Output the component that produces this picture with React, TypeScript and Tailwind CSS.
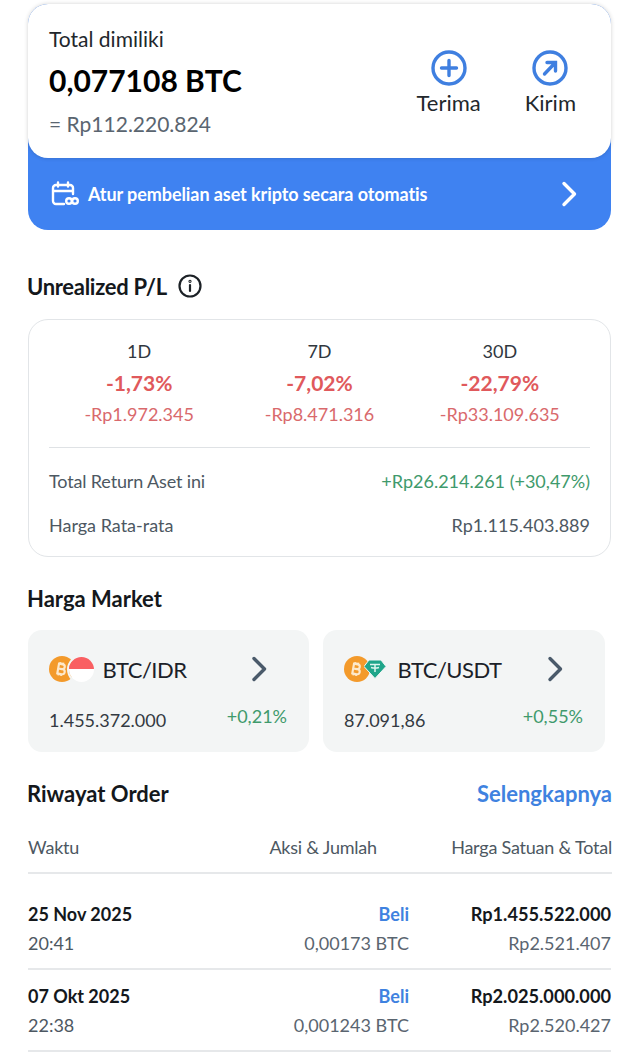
const stats = [
  { label: "1D", pct: "-1,73%", value: "-Rp1.972.345" },
  { label: "7D", pct: "-7,02%", value: "-Rp8.471.316" },
  { label: "30D", pct: "-22,79%", value: "-Rp33.109.635" },
];

const orders = [
  { date: "25 Nov 2025", time: "20:41", amount: "0,00173 BTC", price: "Rp1.455.522.000", total: "Rp2.521.407", rowClass: "h-[96px] pt-[28px]" },
  { date: "07 Okt 2025", time: "22:38", amount: "0,001243 BTC", price: "Rp2.025.000.000", total: "Rp2.520.427", rowClass: "h-[82px] pt-[14px]" },
];

const Chevron = ({ className }: { className: string }) => (
  <svg viewBox="0 0 16 26" className={className} fill="none" stroke="currentColor" strokeWidth="3.4" strokeLinecap="round" strokeLinejoin="round">
    <path d="M3 2.5 13.5 13 3 23.5" />
  </svg>
);

const BtcIcon = () => (
  <svg viewBox="0 0 26 26" className="w-[26px] h-[26px] shrink-0">
    <circle cx="13" cy="13" r="13" fill="#f39a2b" />
    <g stroke="#fde9cc" fill="none" transform="translate(-0.5 0) rotate(10 12 13) scale(0.9) translate(1.2 1.4)">
      <path d="M9.5 7.5h4.2a2.6 2.6 0 0 1 0 5.4H9.5h5a2.8 2.8 0 0 1 0 5.6H9.5zM9.5 7.5v11M11 5.5v2M14 5.5v2M11 18.5v2M14 18.5v2" strokeWidth="2.4" />
    </g>
  </svg>
);

const IdrIcon = () => (
  <div className="w-[29px] h-[29px] rounded-full overflow-hidden -ml-[8px] shrink-0 border-[2px] border-[#f3f5f5]">
    <div className="h-[12.5px] bg-[#f95f62]" />
    <div className="h-[12.5px] bg-white" />
  </div>
);

const UsdtIcon = () => (
  <svg viewBox="0 0 22 20" className="w-[22px] h-5 -ml-[6px] shrink-0">
    <path d="M5 1h12l5 6.5L11 19.5 0 7.5z" fill="#1fa58a" stroke="#f3f5f5" strokeWidth="1" />
    <path d="M6 5.5h10M11 5.5v7.5M7 8.5c2.2.6 5.8.6 8 0" stroke="#dcf5ee" strokeWidth="1.5" fill="none" />
  </svg>
);

const MarketCard = ({ name, icon, price, change }: { name: string; icon: React.ReactNode; price: string; change: string }) => (
  <div className="bg-[#f3f5f5] rounded-[14px] h-[122px] pl-[21px] pr-[22px] pt-[25px]">
    <div className="flex items-center h-[28px]">
      <div className="flex items-center w-[53px] shrink-0">{icon}</div>
      <span className="text-[22px] tracking-[-0.5px] text-[#1b2128] flex-1 pl-[0.5px]">{name}</span>
      <Chevron className="w-4 h-[26px] text-[#4a5a6a] mr-[20px] shrink-0" />
    </div>
    <div className="flex justify-between mt-[20px]">
      <span className="text-[18px] leading-[27px] text-[#333a42] mt-[4px]">{price}</span>
      <span className="text-[18px] leading-[27px] text-[#3f9a6c]">{change}</span>
    </div>
  </div>
);

export default function App() {
  return (
    <div className="h-[1056px] overflow-hidden bg-white px-[28px] pt-1 font-['Lato',sans-serif]">
      <div className="w-[583px] bg-[#3f82f1] rounded-[20px]">
        <div className="bg-white rounded-[20px] h-[154px] shadow-[0_0_4px_rgba(0,0,0,0.18)] pl-[21px] pr-[35px] pt-[22px] flex justify-between">
          <div>
            <div className="text-[21px] leading-[26px] text-[#22272c]">Total dimiliki</div>
            <div className="text-[30px] leading-[38px] font-bold text-black mt-[9px]">0,077108 BTC</div>
            <div className="text-[21px] leading-[26px] text-[#5a6570] mt-[12px]">= Rp112.220.824</div>
          </div>
          <div className="flex gap-[44px] pt-[24px]">
            <div className="flex flex-col items-center">
              <svg viewBox="0 0 36 36" className="w-9 h-9" fill="none" stroke="#3f7fe0" strokeWidth="3.4" strokeLinecap="round">
                <circle cx="18" cy="18" r="16" />
                <path d="M18 10.5v15M10.5 18h15" />
              </svg>
              <span className="text-[22px] leading-[28px] text-[#22272c] mt-[3px]">Terima</span>
            </div>
            <div className="flex flex-col items-center">
              <svg viewBox="0 0 36 36" className="w-9 h-9" fill="none" stroke="#3f7fe0" strokeWidth="3.4" strokeLinecap="round">
                <circle cx="18" cy="18" r="16" />
                <path d="M12.5 24 23 13M15 12.5h8.5V21" />
              </svg>
              <span className="text-[22px] leading-[28px] text-[#22272c] mt-[3px]">Kirim</span>
            </div>
          </div>
        </div>
        <div className="h-[72px] flex items-center pl-[23px] pr-[34px] text-white">
          <svg viewBox="0 0 28 26" className="w-[28px] h-[26px] shrink-0" fill="none" stroke="white" strokeWidth="2.4" strokeLinecap="round">
            <path d="M13 23H5a3 3 0 0 1-3-3V7a3 3 0 0 1 3-3h14a3 3 0 0 1 3 3v6M2 10h20M7 1.5v4M17 1.5v4" />
            <circle cx="18" cy="20" r="2.8" />
            <circle cx="24" cy="20" r="2.8" />
          </svg>
          <span className="text-[18px] font-bold ml-[9px] flex-1 tracking-[-0.08px]">Atur pembelian aset kripto secara otomatis</span>
          <Chevron className="w-4 h-[26px] shrink-0" />
        </div>
      </div>

      <div className="flex items-center mt-[39px] h-[34px] -ml-px">
        <span className="text-[22px] font-bold tracking-[-0.3px] text-[#14181c]">Unrealized P/L</span>
        <svg viewBox="0 0 24 24" className="w-6 h-6 ml-[11px]" fill="none" stroke="#1c2126" strokeWidth="2.2" strokeLinecap="round">
          <circle cx="12" cy="12" r="10.5" />
          <path d="M12 11v6" />
          <circle cx="12" cy="7.3" r="0.5" />
        </svg>
      </div>

      <div className="w-[583px] h-[238px] border border-[#e2e5e8] rounded-[20px] mt-[16px] px-[20px] pt-[20px]">
        <div className="grid grid-cols-3 h-[108px] border-b border-[#dfe2e5]">
          {stats.map((s) => (
            <div key={s.label} className="flex flex-col items-center">
              <span className="text-[18px] leading-[22px] text-[#30373e]">{s.label}</span>
              <span className="text-[21px] leading-[28px] font-bold text-[#e0595c] mt-[7px]">{s.pct}</span>
              <span className="text-[18px] leading-[24px] text-[#d9696c] mt-[5px]">{s.value}</span>
            </div>
          ))}
        </div>
        <div className="flex justify-between mt-[21px] text-[18px] leading-[24px]">
          <span className="text-[#4d5862] tracking-[-0.15px]">Total Return Aset ini</span>
          <span className="text-[#3f9a6c]">+Rp26.214.261 (+30,47%)</span>
        </div>
        <div className="flex justify-between mt-[20px] text-[18px] leading-[24px] text-[#4d5862]">
          <span>Harga Rata-rata</span>
          <span>Rp1.115.403.889</span>
        </div>
      </div>

      <div className="text-[22px] leading-[30px] font-bold text-[#14181c] mt-[27px] -ml-px">Harga Market</div>
      <div className="flex gap-[14px] mt-[16px] w-[577px]">
        <div className="w-[281px] shrink-0">
          <MarketCard name="BTC/IDR" icon={<><BtcIcon /><IdrIcon /></>} price="1.455.372.000" change="+0,21%" />
        </div>
        <div className="w-[282px] shrink-0">
          <MarketCard name="BTC/USDT" icon={<><BtcIcon /><UsdtIcon /></>} price="87.091,86" change="+0,55%" />
        </div>
      </div>

      <div className="flex justify-between items-center mt-[26px] h-[30px]">
        <span className="text-[22px] font-bold text-[#14181c] -ml-px">Riwayat Order</span>
        <span className="text-[22px] font-bold text-[#3f82e0]">Selengkapnya</span>
      </div>

      <div className="flex justify-between w-[584px] mt-[27px] h-[39px] border-b-2 border-[#e6e8ea] text-[18px] leading-[24px] tracking-[-0.22px] text-[#4d5862]">
        <span>Waktu</span>
        <span className="whitespace-nowrap ml-[116px]">Aksi &amp; Jumlah</span>
        <span className="whitespace-nowrap">Harga Satuan &amp; Total</span>
      </div>

      {orders.map((o) => (
        <div key={o.date} className={`flex justify-between w-[583px] border-b-2 border-[#e6e8ea] ${o.rowClass}`}>
          <div>
            <div className="text-[18px] leading-[24px] font-bold text-[#14181c]">{o.date}</div>
            <div className="text-[18px] leading-[24px] text-[#4d5862] mt-[5px]">{o.time}</div>
          </div>
          <div className="flex-1 text-right pr-[2px]">
            <div className="text-[18px] leading-[24px] font-bold text-[#3f82e0]">Beli</div>
            <div className="text-[18px] leading-[24px] text-[#5a6570] mt-[5px]">{o.amount}</div>
          </div>
          <div className="w-[200px] text-right">
            <div className="text-[18.2px] leading-[24px] font-bold text-[#14181c]">{o.price}</div>
            <div className="text-[18px] leading-[24px] text-[#5a6570] mt-[5px]">{o.total}</div>
          </div>
        </div>
      ))}
    </div>
  );
}
